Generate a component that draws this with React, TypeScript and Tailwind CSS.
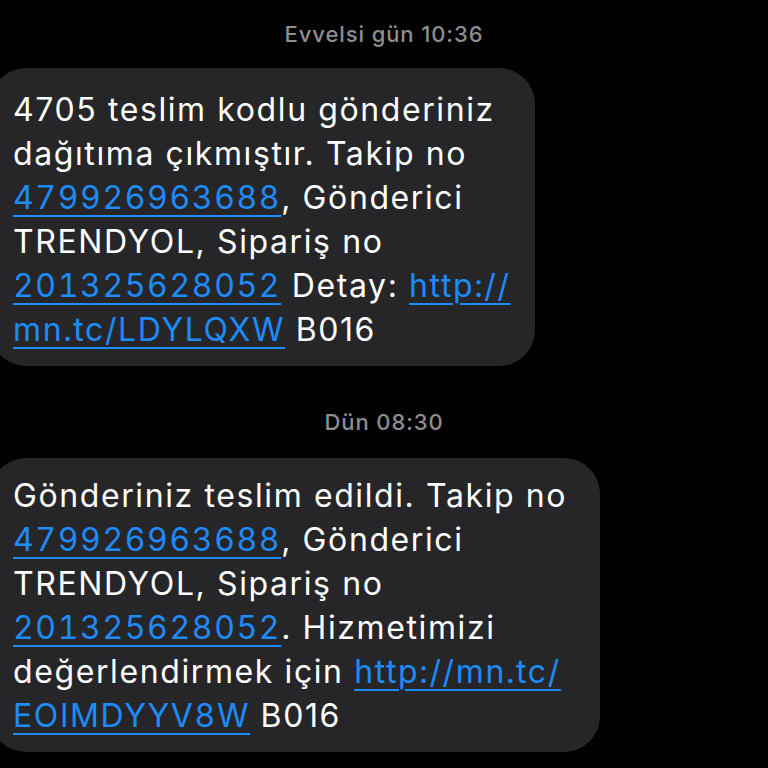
const L = ({ children }: { children: React.ReactNode }) => (
  <span className="text-[#1e8bfa] underline decoration-2 underline-offset-[6px] tabular-nums">{children}</span>
);

function Stamp({ children }: { children: React.ReactNode }) {
  return (
    <div className="text-center text-[22px] leading-[28px] tracking-[0.9px] text-[#8e8e93] font-medium">{children}</div>
  );
}

export default function App() {
  return (
    <div
      className="w-[768px] h-[768px] overflow-hidden bg-black text-white"
      style={{ fontFamily: "Inter, 'Noto Sans', sans-serif" }}
    >
      <div className="pt-[20px]">
        <Stamp>Evvelsi gün 10:36</Stamp>
      </div>

      {/* first message */}
      <div className="mt-[20px] -ml-[10px] w-[545px] rounded-[36px] bg-[#262628] pl-[23px] pt-[20px] pb-[14px] text-[32px] leading-[44px] tracking-[1.6px]">
        4705 teslim kodlu gönderiniz
        <br />
        dağıtıma çıkmıştır. Takip no
        <br />
        <L>479926963688</L>, Gönderici
        <br />
        TRENDYOL, Sipariş no
        <br />
        <L>201325628052</L> Detay: <L>http://</L>
        <br />
        <L>mn.tc/LDYLQXW</L> B016
      </div>

      <div className="pt-[42px]">
        <Stamp>Dün 08:30</Stamp>
      </div>

      {/* second message */}
      <div className="mt-[22px] -ml-[10px] w-[610px] rounded-[36px] bg-[#262628] pl-[23px] pt-[16px] pb-[14px] text-[32px] leading-[44px] tracking-[1.6px]">
        Gönderiniz teslim edildi. Takip no
        <br />
        <L>479926963688</L>, Gönderici
        <br />
        TRENDYOL, Sipariş no
        <br />
        <L>201325628052</L>. Hizmetimizi
        <br />
        değerlendirmek için <L>http://mn.tc/</L>
        <br />
        <L>EOIMDYYV8W</L> B016
      </div>
    </div>
  );
}
